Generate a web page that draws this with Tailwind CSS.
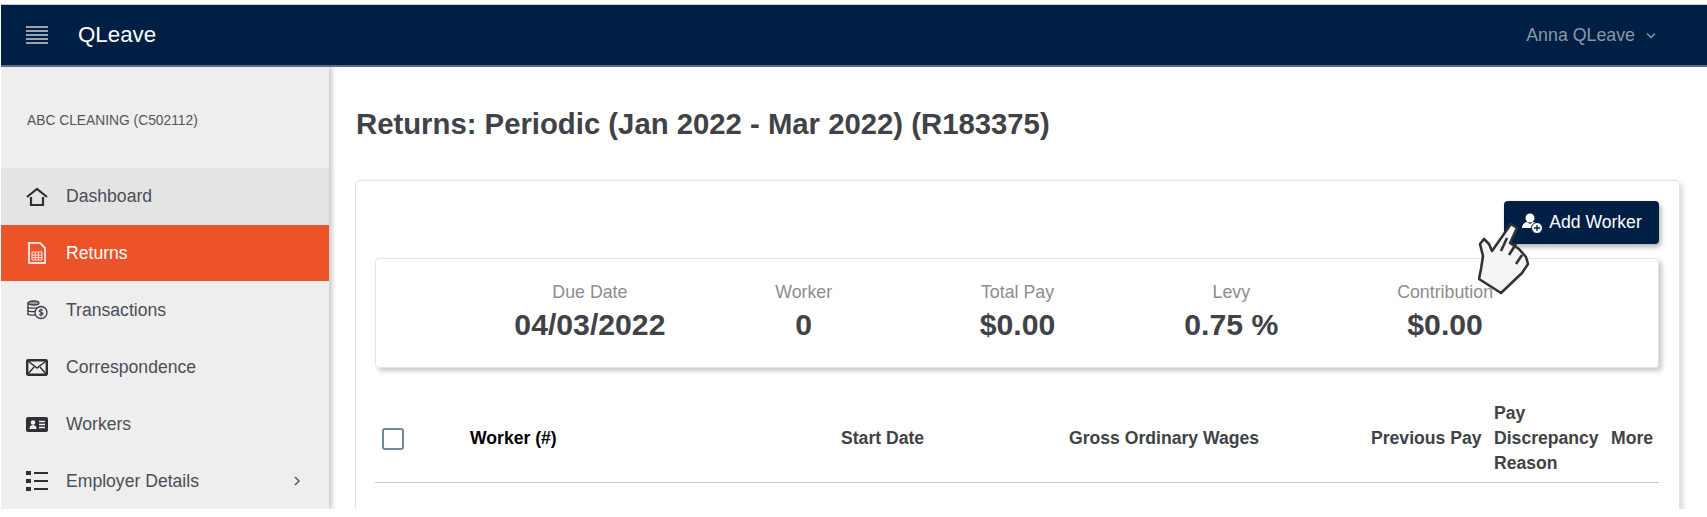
<!DOCTYPE html>
<html lang="en">
<head>
    <meta charset="UTF-8">
    <title>QLeave - Returns</title>
    <script src="https://cdn.jsdelivr.net/npm/@tailwindcss/browser@4"></script>
</head>
<body class="bg-white h-[517px] overflow-hidden font-['Liberation_Sans',Arial,sans-serif] text-[#444]">
    <!-- top bar -->
    <div class="mt-[4px] ml-[1px] h-[63px] bg-[#001f45] border-t border-t-[#c9ccd1] border-b-2 border-b-[#5a6d88] flex items-center">
        <svg class="ml-[25px] w-[22px] h-[18px]" viewBox="0 0 22 18" fill="#9aa2ae"><rect y="0" width="22" height="2"/><rect y="4" width="22" height="2"/><rect y="8" width="22" height="2"/><rect y="12" width="22" height="2"/><rect y="16" width="22" height="2"/></svg>
        <span class="ml-[30px] text-[22.3px] text-white">QLeave</span>
        <span class="ml-auto text-[17.8px] text-[#8c97a8]">Anna QLeave</span>
        <svg class="ml-[11px] mr-[51px] w-[10px] h-[7px]" viewBox="0 0 10 7" fill="none" stroke="#8c97a8" stroke-width="1.5"><path d="M1 1.5l4 4 4-4"/></svg>
    </div>

    <div class="flex h-[442px] ml-[1px] overflow-hidden">
        <!-- sidebar -->
        <div class="w-[328px] shrink-0 bg-[#eeeeee] shadow-[3px_0_5px_rgba(0,0,0,0.22)] text-[17.6px] text-[#4a4f57]">
            <div class="h-[101px] flex items-center pl-[26px] pt-[8px] text-[13.8px] text-[#555]">ABC CLEANING (C502112)</div>
            <div class="h-[57px] bg-[#e4e4e4] flex items-center">
                <svg class="ml-[25px] w-[22px] h-[20px]" viewBox="0 0 22 20" fill="none" stroke="#2f2f35" stroke-width="2.200"><path d="M1 10L11 2l10 8"/><path d="M5 10v8h12v-8"/></svg>
                <span class="ml-[18px]">Dashboard</span>
            </div>
            <div class="h-[56px] bg-[#ec5328] flex items-center text-white">
                <svg class="ml-[26px] w-[20px] h-[22px]" viewBox="0 0 20 22" fill="none" stroke="#ffdfe2" stroke-width="2"><path d="M2 1h11l5 5v15H2z"/><path d="M5 10h10v8H5zM5 13h10M5 15.500h10M8.300 10v8M11.600 10v8" stroke-width="1"/></svg>
                <span class="ml-[19px]">Returns</span>
            </div>
            <div class="h-[57px] pt-[1px] flex items-center">
                <svg class="ml-[25px] w-[22px] h-[20px]" viewBox="0 0 22 20" fill="none" stroke="#3a3a42" stroke-width="1.300"><ellipse cx="7.500" cy="3" rx="5.500" ry="2" fill="#9a9aa0"/><path d="M1 7c2 1.500 8 1.500 11 .5M1 10.500c2 1 6 1.200 8 .8M1 14c2 1 6 1.200 8 .8M2 3v12"/><circle cx="15" cy="12.500" r="6" fill="#eee"/><path d="M17 10.300c-1-.8-4-.8-4 .8s4 1 4 2.600-3 1.500-4 .6M15 8.500v8" stroke-width="1.100"/></svg>
                <span class="ml-[18px]">Transactions</span>
            </div>
            <div class="h-[57px] pt-[1px] flex items-center">
                <svg class="ml-[25px] w-[22px] h-[17px]" viewBox="0 0 22 17" fill="none" stroke="#2f2f35" stroke-width="2.400"><rect x="1.200" y="1.200" width="19.600" height="14.600" rx="1"/><path d="M2 2l9 7 9-7M2 15l6-7M20 15l-6-7" stroke-width="1.400"/></svg>
                <span class="ml-[18px]">Correspondence</span>
            </div>
            <div class="h-[57px] pt-[1px] flex items-center">
                <svg class="ml-[25px] w-[22px] h-[15px]" viewBox="0 0 22 15"><rect width="22" height="15" rx="2" fill="#2f2f35"/><circle cx="7" cy="5.500" r="2.300" fill="#eee"/><path d="M3.500 12c0-3 1.500-4 3.500-4s3.500 1 3.500 4z" fill="#eee"/><path d="M13 4.500h6M13 7.500h6M13 10.500h6" stroke="#eee" stroke-width="1.300"/></svg>
                <span class="ml-[18px]">Workers</span>
            </div>
            <div class="h-[57px] pt-[1px] flex items-center">
                <svg class="ml-[25px] w-[22px] h-[20px]" viewBox="0 0 22 20" fill="#2f2f35"><rect y="0" width="5" height="4"/><rect y="8" width="5" height="4"/><rect y="16" width="5" height="4"/><rect x="8" y="1" width="14" height="2"/><rect x="8" y="9" width="14" height="2"/><rect x="8" y="17" width="14" height="2"/></svg>
                <span class="ml-[18px]">Employer Details</span>
                <svg class="ml-auto mr-[29px] w-[6px] h-[10px]" viewBox="0 0 6 10" fill="none" stroke="#555" stroke-width="1.500"><path d="M1 1l4 4-4 4"/></svg>
            </div>
        </div>

        <!-- main -->
        <div class="flex-1 pl-[26px] pr-[27px] min-w-0">
            <h1 class="mt-[39px] ml-[1px] h-[36px] leading-[36px] text-[29.3px] font-bold text-[#3f4247] whitespace-nowrap">Returns: Periodic (Jan 2022 - Mar 2022) (R183375)</h1>
            <div class="relative mt-[38px] h-[400px] rounded-[5px] border border-[#e2e2e2] shadow-[3px_3px_5px_rgba(0,0,0,0.15)] pt-[20px] pl-[19px] pr-[20px]">
                <div class="flex justify-end">
                    <button class="w-[155px] h-[43px] rounded-[4px] bg-[#001f45] text-white text-[17.6px] flex items-center justify-center gap-[6px] shadow-[2px_3px_5px_rgba(0,0,0,0.3)]">
                        <svg class="w-[22px] h-[22px]" viewBox="0 0 22 22"><circle cx="9" cy="6" r="4.500" fill="#fff"/><path d="M1 16c0-4 3-6 5-6l3 2 3-2c1 0 2 .5 3 1l-2 5z" fill="#fff"/><circle cx="16" cy="16" r="5.500" fill="#fff" stroke="#001f45"/><path d="M13 16h6M16 13v6" stroke="#001f45" stroke-width="1.300"/></svg>
                        <span>Add Worker</span>
                    </button>
                </div>
                <!-- summary -->
                <div class="mt-[14px] h-[110px] rounded-[4px] border border-[#e4e4e4] shadow-[3px_3px_5px_rgba(0,0,0,0.22)] flex pl-[107px] pt-[23px]">
                    <div class="w-[213.8px] text-center"><div class="text-[17.8px] leading-[20px] text-[#8d8d8d]">Due Date</div><div class="mt-[5px] text-[30.2px] leading-[36px] font-bold text-[#3f4247]">04/03/2022</div></div>
                    <div class="w-[213.8px] text-center"><div class="text-[17.8px] leading-[20px] text-[#8d8d8d]">Worker</div><div class="mt-[5px] text-[30.2px] leading-[36px] font-bold text-[#3f4247]">0</div></div>
                    <div class="w-[213.8px] text-center"><div class="text-[17.8px] leading-[20px] text-[#8d8d8d]">Total Pay</div><div class="mt-[5px] text-[30.2px] leading-[36px] font-bold text-[#3f4247]">$0.00</div></div>
                    <div class="w-[213.8px] text-center"><div class="text-[17.8px] leading-[20px] text-[#8d8d8d]">Levy</div><div class="mt-[5px] text-[30.2px] leading-[36px] font-bold text-[#3f4247]">0.75 %</div></div>
                    <div class="w-[213.8px] text-center"><div class="text-[17.8px] leading-[20px] text-[#8d8d8d]">Contribution</div><div class="mt-[5px] text-[30.2px] leading-[36px] font-bold text-[#3f4247]">$0.00</div></div>
                </div>
                <!-- table head -->
                <div class="mt-[27px] h-[88px] border-b border-b-[#c4c4c4] flex items-center text-[17.6px] leading-[25px] font-bold text-[#3f4247]">
                    <div class="w-[95px] pl-[7px]"><div class="w-[22px] h-[22px] rounded-[3px] border-2 border-[#6f8a99]"></div></div>
                    <div class="w-[371px] text-black">Worker (#)</div>
                    <div class="w-[228px]">Start Date</div>
                    <div class="w-[302px]">Gross Ordinary Wages</div>
                    <div class="w-[123px] whitespace-nowrap">Previous Pay</div>
                    <div class="w-[117px]">Pay Discrepancy Reason</div>
                    <div>More</div>
                </div>
                <!-- hand cursor over the button -->
                <svg class="absolute left-[1122px] top-[41px] w-[52px] h-[73px]" viewBox="0 0 52 73">
                    <path d="M33 2 L39 6 L32 21 L41 27 L48 35 L50 42 L44 51 L23 71 L1 57 L3 47 L5 34 L2 22 L6 17 L11 22 L14 29 Z" fill="#f4f4f4" stroke="#333" stroke-width="2.600" stroke-linejoin="round"/>
                    <path d="M23 29L29 16M31 33L38 22M38 42L44 33" fill="none" stroke="#333" stroke-width="2.600"/>
                </svg>
            </div>
        </div>
    </div>
</body>
</html>
